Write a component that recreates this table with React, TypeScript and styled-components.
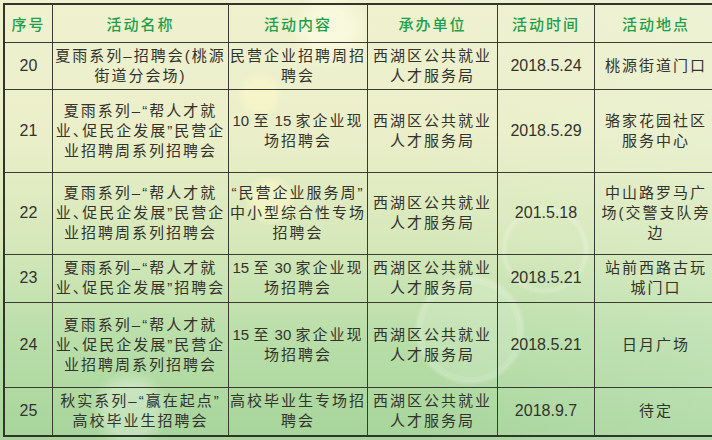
import React from "react";
import styled, { createGlobalStyle } from "styled-components";

const Global = createGlobalStyle`
  html, body { margin: 0; padding: 0; }
  body { width: 712px; height: 440px; overflow: hidden; }
`;

const Page = styled.div`
  width: 712px;
  height: 440px;
  box-sizing: border-box;
  padding: 3px 0 0 3px;
  font-family: "Liberation Sans", "Noto Sans CJK SC", sans-serif;
  background:
    radial-gradient(circle at 470px 330px, rgba(255,255,255,0) 0 46px, rgba(255,255,255,0.28) 51px, rgba(255,255,255,0) 56px),
    radial-gradient(circle at 470px 330px, rgba(255,255,255,0.14) 0 48px, rgba(255,255,255,0) 50px),
    radial-gradient(circle at 545px 250px, rgba(255,255,255,0) 0 37px, rgba(255,255,255,0.22) 41px, rgba(255,255,255,0) 45px),
    radial-gradient(circle at 270px 200px, rgba(255,250,200,0.55) 0 16px, rgba(255,250,200,0) 26px),
    radial-gradient(circle at 260px 95px, rgba(255,250,200,0.5) 0 14px, rgba(255,250,200,0) 24px),
    radial-gradient(circle at 130px 410px, rgba(255,255,255,0.3) 0 25px, rgba(255,255,255,0) 40px),
    radial-gradient(circle at 330px 30px, rgba(255,255,230,0.6) 0 20px, rgba(255,255,230,0) 40px),
    linear-gradient(90deg, rgba(255,255,255,0) 0%, rgba(255,255,255,0) 60%, rgba(230,245,230,0.2) 100%),
    linear-gradient(180deg, #eff1cf 0%, #ebefc9 30%, #d6e8ba 55%, #bbdfaa 75%, #a6d59b 100%);
`;

const Table = styled.table`
  width: 707px;
  border-collapse: collapse;
  table-layout: fixed;
  border: 2px solid #33352c;
  color: #33332e;
`;

const HeadRow = styled.tr`
  height: 38px;
`;

const HeadCell = styled.th<{ $w: number }>`
  width: ${(p) => p.$w}px;
  border: 1px solid #3a3c32;
  padding: 0;
  font-size: 15px;
  font-weight: 500;
  letter-spacing: 2px;
  color: #1f9e4c;
  text-align: center;
  vertical-align: middle;
`;

const Row = styled.tr<{ $h: number }>`
  height: ${(p) => p.$h}px;
`;

const Cell = styled.td`
  border: 1px solid #3a3c32;
  padding: 0;
  font-size: 15px;
  line-height: 20px;
  letter-spacing: 2px;
  font-feature-settings: "halt";
  text-align: center;
  vertical-align: middle;
  white-space: nowrap;
  overflow: hidden;
`;

const NumCell = styled(Cell)`
  font-size: 16px;
  letter-spacing: 0;
`;

const Line = styled.div`
  white-space: nowrap;
`;

const Latin = styled.span`
  letter-spacing: 0;
`;

type RowData = {
  no: string;
  name: string[];
  content: string[];
  org: string[];
  time: string;
  place: string[];
  h: number;
};

const org = ["西湖区公共就业", "人才服务局"];
const longName = ["夏雨系列–“帮人才就", "业、促民企发展”民营企", "业招聘周系列招聘会"];

const rows: RowData[] = [
  { no: "20", name: ["夏雨系列–招聘会(桃源", "街道分会场)"], content: ["民营企业招聘周招", "聘会"], org, time: "2018.5.24", place: ["桃源街道门口"], h: 47 },
  { no: "21", name: longName, content: ["10 至 15 家企业现", "场招聘会"], org, time: "2018.5.29", place: ["骆家花园社区", "服务中心"], h: 83 },
  { no: "22", name: longName, content: ["“民营企业服务周”", "中小型综合性专场", "招聘会"], org, time: "201.5.18", place: ["中山路罗马广", "场(交警支队旁", "边"], h: 82 },
  { no: "23", name: ["夏雨系列–“帮人才就", "业、促民企发展”招聘会"], content: ["15 至 30 家企业现", "场招聘会"], org, time: "2018.5.21", place: ["站前西路古玩", "城门口"], h: 48 },
  { no: "24", name: longName, content: ["15 至 30 家企业现", "场招聘会"], org, time: "2018.5.21", place: ["日月广场"], h: 85 },
  { no: "25", name: ["秋实系列–“赢在起点”", "高校毕业生招聘会"], content: ["高校毕业生专场招", "聘会"], org, time: "2018.9.7", place: ["待定"], h: 49 },
];

const heads: [string, number][] = [
  ["序号", 47],
  ["活动名称", 175],
  ["活动内容", 138],
  ["承办单位", 129],
  ["活动时间", 96],
  ["活动地点", 122],
];

const renderText = (t: string) =>
  t.split(/([\d ]+)/).map((part, i) =>
    /^[\d ]+$/.test(part) ? <Latin key={i}>{part}</Latin> : part
  );

const Lines = ({ items }: { items: string[] }) => (
  <>
    {items.map((t, i) => (
      <Line key={i}>{renderText(t)}</Line>
    ))}
  </>
);

export default function App() {
  return (
    <Page>
      <Global />
      <Table>
        <thead>
          <HeadRow>
            {heads.map(([t, w]) => (
              <HeadCell key={t} $w={w}>
                {t}
              </HeadCell>
            ))}
          </HeadRow>
        </thead>
        <tbody>
          {rows.map((r) => (
            <Row key={r.no} $h={r.h}>
              <NumCell>{r.no}</NumCell>
              <Cell>
                <Lines items={r.name} />
              </Cell>
              <Cell>
                <Lines items={r.content} />
              </Cell>
              <Cell>
                <Lines items={r.org} />
              </Cell>
              <NumCell>{r.time}</NumCell>
              <Cell>
                <Lines items={r.place} />
              </Cell>
            </Row>
          ))}
        </tbody>
      </Table>
    </Page>
  );
}
